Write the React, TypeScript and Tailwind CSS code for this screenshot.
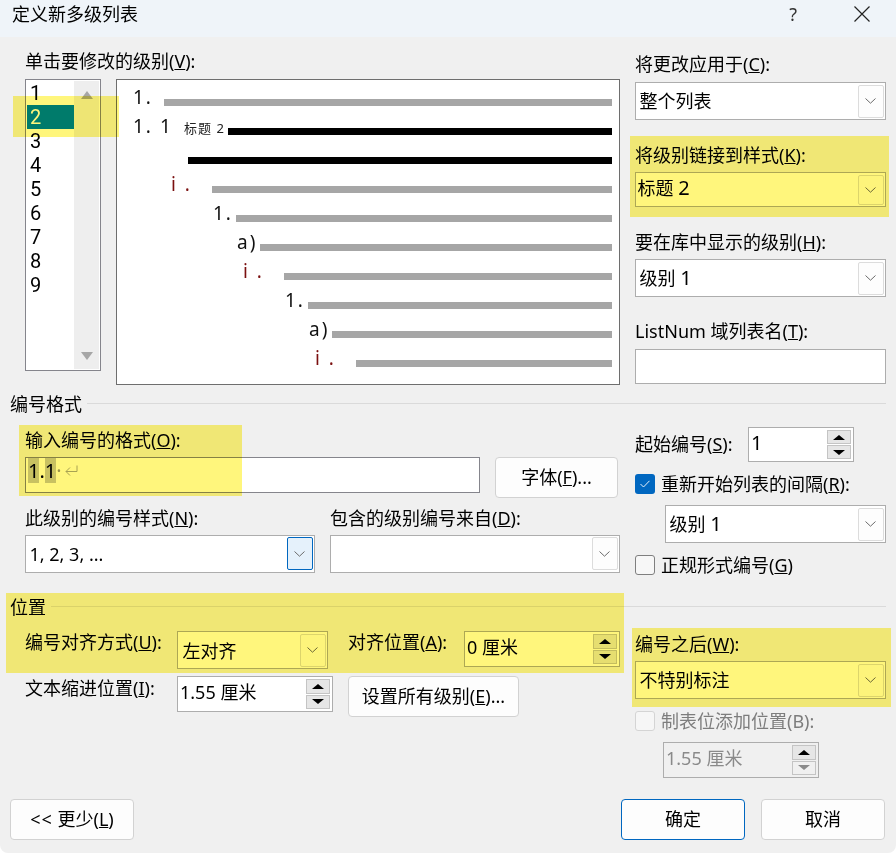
import type { ReactNode } from 'react';

const PREVIEW = [
  { num: '1.', numCls: 'ml-[16px] w-[31px]', color: 'text-[#111]', bar: 'bg-[#a6a6a6]' },
  { num: '1. 1', numCls: 'ml-[16px] w-[51px]', color: 'text-[#111]', bar: 'bg-black', note: '标题 2' },
  { num: '', numCls: 'ml-[71px] w-0', color: '', bar: 'bg-black' },
  { num: 'i .', numCls: 'ml-[54px] w-[41px]', color: 'text-[#7b1010]', bar: 'bg-[#a6a6a6]' },
  { num: '1.', numCls: 'ml-[96px] w-[23px]', color: 'text-[#111]', bar: 'bg-[#a6a6a6]' },
  { num: 'a)', numCls: 'ml-[120px] w-[23px]', color: 'text-[#111]', bar: 'bg-[#a6a6a6]' },
  { num: 'i .', numCls: 'ml-[126px] w-[41px]', color: 'text-[#7b1010]', bar: 'bg-[#a6a6a6]' },
  { num: '1.', numCls: 'ml-[168px] w-[23px]', color: 'text-[#111]', bar: 'bg-[#a6a6a6]' },
  { num: 'a)', numCls: 'ml-[192px] w-[23px]', color: 'text-[#111]', bar: 'bg-[#a6a6a6]' },
  { num: 'i .', numCls: 'ml-[198px] w-[41px]', color: 'text-[#7b1010]', bar: 'bg-[#a6a6a6]' },
];

function Label({ children, className = '' }: { children: ReactNode; className?: string }) {
  return <div className={`h-[24px] leading-[24px] whitespace-nowrap ${className}`}>{children}</div>;
}

function Digit({ children }: { children: ReactNode }) {
  return <span className="text-[20px]">{children}</span>;
}

function Chevron() {
  return (
    <svg width="11" height="6" viewBox="0 0 11 6" fill="none" stroke="#6b6b6b" strokeWidth="1">
      <path d="M0.5 0.5 L5.5 5.2 L10.5 0.5" />
    </svg>
  );
}

function Combo({ text, className = '', focused = false, textCls = 'pl-[2px]' }: { text?: ReactNode; className?: string; focused?: boolean; textCls?: string }) {
  return (
    <div className={`flex items-stretch bg-white border border-[#adadad] p-[1.5px] ${className}`}>
      <div className={`flex-1 flex items-center whitespace-nowrap leading-none ${textCls}`}>
        <span>{text}</span>
      </div>
      <div
        className={`w-[26px] flex items-center justify-center rounded-[2px] border ${
          focused ? 'border-[#0067c0] bg-[#e5f1fb]' : 'border-[#dcdcdc] bg-[#fdfdfd]'
        }`}
      >
        <Chevron />
      </div>
    </div>
  );
}

function Spin({ text, className = '', disabled = false }: { text: ReactNode; className?: string; disabled?: boolean }) {
  return (
    <div className={`flex items-stretch border border-[#adadad] p-[2px] ${disabled ? 'bg-[#f0f0f0]' : 'bg-white'} ${className}`}>
      <div className={`flex-1 flex items-center pb-[4px] whitespace-nowrap ${disabled ? 'text-[#8a8a8a]' : ''}`}>
        <span>{text}</span>
      </div>
      <div className="w-[24px] flex flex-col gap-px">
        <div className="flex-1 flex items-center justify-center bg-[#e6e6e6] border border-[#c4c4c4]">
          <div className="w-0 h-0 border-x-[6px] border-x-transparent border-b-[5px] border-b-black" />
        </div>
        <div className={`flex-1 flex items-center justify-center border border-[#c4c4c4] ${disabled ? 'bg-[#f0f0f0]' : 'bg-[#e6e6e6]'}`}>
          <div className={`w-0 h-0 border-x-[6px] border-x-transparent border-t-[5px] ${disabled ? 'border-t-[#8a8a8a]' : 'border-t-black'}`} />
        </div>
      </div>
    </div>
  );
}

function Check({ checked = false, disabled = false }: { checked?: boolean; disabled?: boolean }) {
  if (checked) {
    return (
      <div className="w-[20px] h-[20px] rounded-[3px] bg-[#0067c0] flex items-center justify-center">
        <svg width="10" height="8" viewBox="0 0 10 8" fill="none" stroke="white" strokeWidth="0.9">
          <path d="M0.5 4 L3.5 7 L9.5 0.8" />
        </svg>
      </div>
    );
  }
  return (
    <div className={`w-[20px] h-[20px] rounded-[3px] border ${disabled ? 'border-[#d4d4d4] bg-[#f6f6f6]' : 'border-[#7f7f7f] bg-[#f7f7f7]'}`} />
  );
}

function CheckRow({ children }: { children: ReactNode }) {
  return <div className="mt-[12px] h-[20px] flex items-center gap-[6px]">{children}</div>;
}

function Btn({ children, className = '', primary = false }: { children: ReactNode; className?: string; primary?: boolean }) {
  return (
    <div
      className={`h-[41px] flex items-center justify-center rounded-[4px] bg-[#fdfdfd] border whitespace-nowrap ${
        primary ? 'border-[#0067c0]' : 'border-[#d2d2d2]'
      } ${className}`}
    >
      {children}
    </div>
  );
}

function Heading({ text }: { text: string }) {
  return (
    <div className="h-[24px] leading-[24px] flex items-center pl-[10px] pr-[10px] gap-[5px]">
      <span>{text}</span>
      <div className="flex-1 h-px bg-[#dadada] -mt-[2px]" />
    </div>
  );
}

export default function App() {
  return (
    <div className="relative w-[896px] h-[853px] overflow-hidden bg-white">
      <div className="relative w-full h-full flex flex-col bg-[#f0f0f0] rounded-b-[8px] overflow-hidden text-[18px] text-black font-['Noto_Sans','Noto_Sans_CJK_SC',sans-serif]">
        {/* Title bar */}
        <div className="h-[37px] shrink-0 bg-[#eff4f9] flex items-center pl-[12px]">
          <span className="flex-1 -mt-[9px]">定义新多级列表</span>
          <span className="mr-[57px] -mt-[9px] text-[#333]">?</span>
          <svg className="mr-[26px] -mt-[9px]" width="16" height="16" viewBox="0 0 16 16" fill="none" stroke="#222" strokeWidth="1.2">
            <path d="M0.5 0.5 L15.5 15.5 M15.5 0.5 L0.5 15.5" />
          </svg>
        </div>

        {/* Levels and preview */}
        <div className="h-[355px] shrink-0 flex pl-[25px]">
          <div className="w-[595px]">
            <Label className="mt-[12px] mb-[6px]">
              单击要修改的级别(<u>V</u>):
            </Label>
            <div className="flex items-start gap-[15px]">
              <div className="w-[76px] h-[292px] bg-white border border-[#85858c] flex">
                <div className="w-[48px] pt-px pl-px text-[20px] font-['Roboto',sans-serif]">
                  {[1, 2, 3, 4, 5, 6, 7, 8, 9].map((n) => (
                    <div key={n} className={`h-[24px] leading-[24px] pl-[3px] ${n === 2 ? 'bg-[#0080dc] text-white' : ''}`}>
                      {n}
                    </div>
                  ))}
                </div>
                <div className="flex-1 bg-[#eeeeee] my-px mr-px flex flex-col items-center justify-between pt-[10px] pb-[9px]">
                  <div className="w-0 h-0 border-x-[6px] border-x-transparent border-b-[8px] border-b-[#a6a6a6]" />
                  <div className="w-0 h-0 border-x-[6px] border-x-transparent border-t-[8px] border-t-[#a6a6a6]" />
                </div>
              </div>
              <div className="w-[504px] h-[306px] bg-white border border-[#6e6e6e] pt-[4px] pr-[7px] text-[19px]">
                {PREVIEW.map((row, i) => (
                  <div key={i} className="h-[29px] flex items-end pb-[7px]">
                    <div className={`shrink-0 relative self-stretch ${row.numCls}`}>
                      <span className={`absolute left-0 top-[2px] leading-[22px] tracking-[2px] whitespace-nowrap ${row.color}`}>{row.num}</span>
                      {row.note && (
                        <span className="absolute left-[51px] top-[7px] text-[13px] leading-[16px] tracking-[1px] whitespace-nowrap text-[#222]">{row.note}</span>
                      )}
                    </div>
                    <div className={`flex-1 h-[7px] ${row.note ? 'ml-[44px]' : ''} ${row.bar}`} />
                  </div>
                ))}
              </div>
            </div>
          </div>
          <div className="ml-[15px] w-[251px]">
            <Label className="mt-[15px] mb-[6px]">
              将更改应用于(<u>C</u>):
            </Label>
            <Combo text="整个列表" className="h-[38px]" />
            <Label className="mt-[23px] mb-[5px]">
              将级别链接到样式(<u>K</u>):
            </Label>
            <Combo text={<>标题 <Digit>2</Digit></>} className="h-[35px]" textCls="pb-[3px]" />
            <Label className="mt-[23px] mb-[5px]">
              要在库中显示的级别(<u>H</u>):
            </Label>
            <Combo text={<>级别 <Digit>1</Digit></>} className="h-[38px]" />
            <Label className="mt-[22px] mb-[6px]">
              ListNum 域列表名(<u>T</u>):
            </Label>
            <div className="h-[35px] bg-white border border-[#adadad]" />
          </div>
        </div>

        {/* Number format */}
        <Heading text="编号格式" />
        <div className="h-[179px] shrink-0 flex pl-[25px]">
          <div className="w-[595px]">
            <Label className="mt-[12px] mb-[5px]">
              输入编号的格式(<u>O</u>):
            </Label>
            <div className="flex items-start gap-[15px]">
              <div className="w-[455px] h-[36px] bg-white border border-[#85858c] flex items-start pl-[2px] text-[20px]">
                <span className="bg-[#c8c8c8] h-[25px] leading-[26px]">1</span>
                <span className="h-[25px] leading-[26px]">.</span>
                <span className="bg-[#c8c8c8] h-[25px] leading-[26px]">1</span>
                <span className="h-[25px] leading-[26px] text-[#9a9a9a]">·</span>
                <svg className="ml-[3px] mt-[7px]" width="13" height="12" viewBox="0 0 13 12" fill="none" stroke="#a8a8a8" strokeWidth="1">
                  <path d="M12 0.5 V6.5 H1 M5 2.5 L1 6.5 L5 10.5" />
                </svg>
              </div>
              <Btn className="w-[123px]">
                字体(<u>F</u>)...
              </Btn>
            </div>
            <div className="flex gap-[15px] -mt-[0.5px]">
              <div className="w-[290px]">
                <Label className="mt-[8px] mb-[5px]">
                  此级别的编号样式(<u>N</u>):
                </Label>
                <Combo text="1, 2, 3, ..." className="h-[38px]" focused />
              </div>
              <div className="w-[290px]">
                <Label className="mt-[8px] mb-[5px]">
                  包含的级别编号来自(<u>D</u>):
                </Label>
                <Combo className="h-[38px]" />
              </div>
            </div>
          </div>
          <div className="ml-[15px] w-[251px]">
            <div className="mt-[11px] flex items-center">
              <Label className="w-[113px] -mt-[2px]">
                起始编号(<u>S</u>):
              </Label>
              <Spin text={<Digit>1</Digit>} className="w-[106px] h-[35px]" />
            </div>
            <CheckRow>
              <Check checked />
              <Label>
                重新开始列表的间隔(<u>R</u>):
              </Label>
            </CheckRow>
            <Combo text={<>级别 <Digit>1</Digit></>} className="ml-[30px] mt-[11px] h-[38px]" />
            <CheckRow>
              <Check />
              <Label>
                正规形式编号(<u>G</u>)
              </Label>
            </CheckRow>
          </div>
        </div>

        {/* Position */}
        <Heading text="位置" />
        <div className="flex pl-[25px]">
          <div className="w-[595px]">
            <div className="mt-[12px] flex items-start">
              <Label className="w-[152px] -mt-px">
                编号对齐方式(<u>U</u>):
              </Label>
              <Combo text="左对齐" className="w-[151px] h-[38px]" textCls="pl-[3px] pt-[2px]" />
              <Label className="ml-[20px] w-[116px] -mt-px">
                对齐位置(<u>A</u>):
              </Label>
              <Spin text="0 厘米" className="w-[156px] h-[36px]" />
            </div>
            <div className="mt-[7px] flex items-start">
              <Label className="w-[152px]">
                文本缩进位置(<u>I</u>):
              </Label>
              <Spin text="1.55 厘米" className="w-[156px] h-[36px]" />
              <Btn className="ml-[15px] w-[171px]">
                设置所有级别(<u>E</u>)...
              </Btn>
            </div>
          </div>
          <div className="ml-[15px] w-[251px]">
            <Label className="mt-[13px] mb-[5px]">
              编号之后(<u>W</u>):
            </Label>
            <Combo text="不特别标注" className="h-[38px]" />
            <CheckRow>
              <Check disabled />
              <Label className="text-[#7d7d7d]">制表位添加位置(B):</Label>
            </CheckRow>
            <Spin text="1.55 厘米" disabled className="ml-[28px] mt-[11px] w-[156px] h-[36px]" />
          </div>
        </div>

        {/* Footer */}
        <div className="mt-auto mb-[13px] flex pl-[10px] pr-[11px]">
          <Btn className="w-[124px]">
            <span className="tracking-[1px]">&lt;&lt;</span>&nbsp;更少(<u>L</u>)
          </Btn>
          <Btn primary className="ml-auto w-[124px]">
            确定
          </Btn>
          <Btn className="ml-[16px] w-[124px]">取消</Btn>
        </div>

        {/* Yellow marker strokes */}
        <div className="absolute left-[13px] top-[96px] w-[106px] h-[41px] bg-[#fff67c] mix-blend-multiply" />
        <div className="absolute left-[630px] top-[136px] w-[259px] h-[81px] bg-[#fff67c] mix-blend-multiply" />
        <div className="absolute left-[19px] top-[425px] w-[223px] h-[71px] bg-[#fff67c] mix-blend-multiply" />
        <div className="absolute left-[6px] top-[593px] w-[618px] h-[80px] bg-[#fff67c] mix-blend-multiply" />
        <div className="absolute left-[632px] top-[628px] w-[259px] h-[79px] bg-[#fff67c] mix-blend-multiply" />
      </div>
    </div>
  );
}
